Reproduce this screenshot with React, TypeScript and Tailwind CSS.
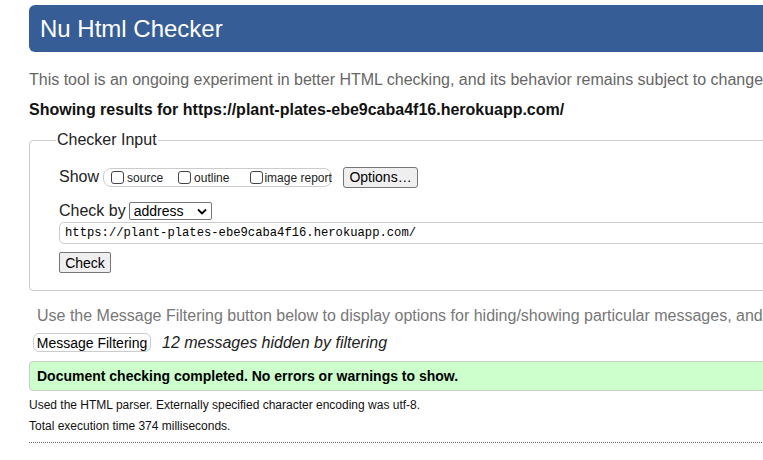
import React from 'react';

const App: React.FC = () => {
  return (
    <div className="h-[460px] w-[763px] overflow-hidden bg-white font-['Liberation_Sans',Arial,sans-serif] text-black">
      <div className="w-[1100px] pl-[29px] pt-[5px]">
        <h1 className="flex h-[47px] items-center rounded-[6px] bg-[#365d95] pl-[11px] text-[24px] leading-none text-white">
          Nu Html Checker
        </h1>

        <p className="mt-[19px] text-[16px] leading-[18px] text-[#666]">
          This tool is an ongoing experiment in better HTML checking, and its behavior remains subject to change
        </p>
        <p className="mt-[12px] text-[16px] font-bold leading-[18px] text-[#111]">
          Showing results for https://plant-plates-ebe9caba4f16.herokuapp.com/
        </p>

        <fieldset className="mt-[12px] h-[160px] rounded-[4px] border border-[#ccc] pl-[29px] pr-4">
          <legend className="-ml-[3px] px-[1px] text-[16px] leading-[18px] text-[#222]">Checker Input</legend>

          <div className="mt-[18px] flex h-[20px] items-center">
            <span className="text-[16px] leading-none text-[#222]">Show</span>
            <div className="ml-[4px] flex h-[19px] w-[229px] items-center whitespace-nowrap rounded-[8px] border border-[#ccc] pl-[7px] pt-[2px] text-[12px] text-[#222]">
              <label className="flex items-center">
                <span className="-mt-[2px] h-[13px] w-[13px] rounded-[3px] border border-[#444] bg-white" />
                <span className="ml-[3px]">source</span>
              </label>
              <label className="ml-[15px] flex items-center">
                <span className="-mt-[2px] h-[13px] w-[13px] rounded-[3px] border border-[#444] bg-white" />
                <span className="ml-[3px]">outline</span>
              </label>
              <label className="ml-[21px] flex items-center">
                <span className="-mt-[2px] h-[13px] w-[13px] rounded-[3px] border border-[#444] bg-white" />
                <span className="ml-[1px]">image report</span>
              </label>
            </div>
            <button className="ml-[11px] h-[21px] w-[75px] rounded-[3px] border border-[#767676] bg-[#efefef] text-[14px] leading-none text-black">
              Options…
            </button>
          </div>

          <div className="mt-[15px] flex h-[18px] items-center">
            <span className="text-[16px] leading-none text-[#222]">Check by</span>
            <div className="ml-[3px] flex h-[18px] w-[83px] items-center justify-between rounded-[2px] border border-[#767676] pl-[4px] pr-[4px] text-[14px] text-black">
              <span>address</span>
              <svg width="10" height="7" viewBox="0 0 10 7" aria-hidden="true">
                <path d="M1 1.5l4 4 4-4" fill="none" stroke="#000" strokeWidth={1.8} />
              </svg>
            </div>
          </div>

          <div className="mt-[2px] flex h-[22px] items-center rounded-[5px] border border-[#ccc] pl-[5px] font-['Liberation_Mono',monospace] text-[12.2px] text-black">
            https://plant-plates-ebe9caba4f16.herokuapp.com/
          </div>

          <button className="mt-[8px] h-[21px] w-[52px] rounded-[2px] border border-[#767676] bg-[#efefef] text-[14px] leading-none text-black">
            Check
          </button>
        </fieldset>

        <p className="mt-[16px] pl-[8px] text-[16px] leading-[18px] text-[#777]">
          Use the Message Filtering button below to display options for hiding/showing particular messages, and to see total counts of errors and warnings.
        </p>

        <div className="mt-[8px] flex h-[19px] items-center">
          <button className="ml-[4px] h-[19px] w-[118px] rounded-[6px] border border-[#ccc] bg-white text-[14px] leading-none text-black">
            Message Filtering
          </button>
          <span className="ml-[11px] text-[16px] italic text-[#222]">12 messages hidden by filtering</span>
        </div>

        <div className="mt-[9px] flex h-[30px] items-center rounded-l-[4px] border border-[#ccc] bg-[#ccffcc] pl-[7px] text-[14px] font-bold text-black">
          Document checking completed. No errors or warnings to show.
        </div>

        <p className="mt-[7px] text-[12px] leading-[14px] text-[#111]">
          Used the HTML parser. Externally specified character encoding was utf-8.
        </p>
        <p className="mt-[7px] text-[12px] leading-[14px] text-[#111]">Total execution time 374 milliseconds.</p>
        <div className="mt-[9px] border-t border-dotted border-[#666]" />
      </div>
    </div>
  );
};

export default App;
